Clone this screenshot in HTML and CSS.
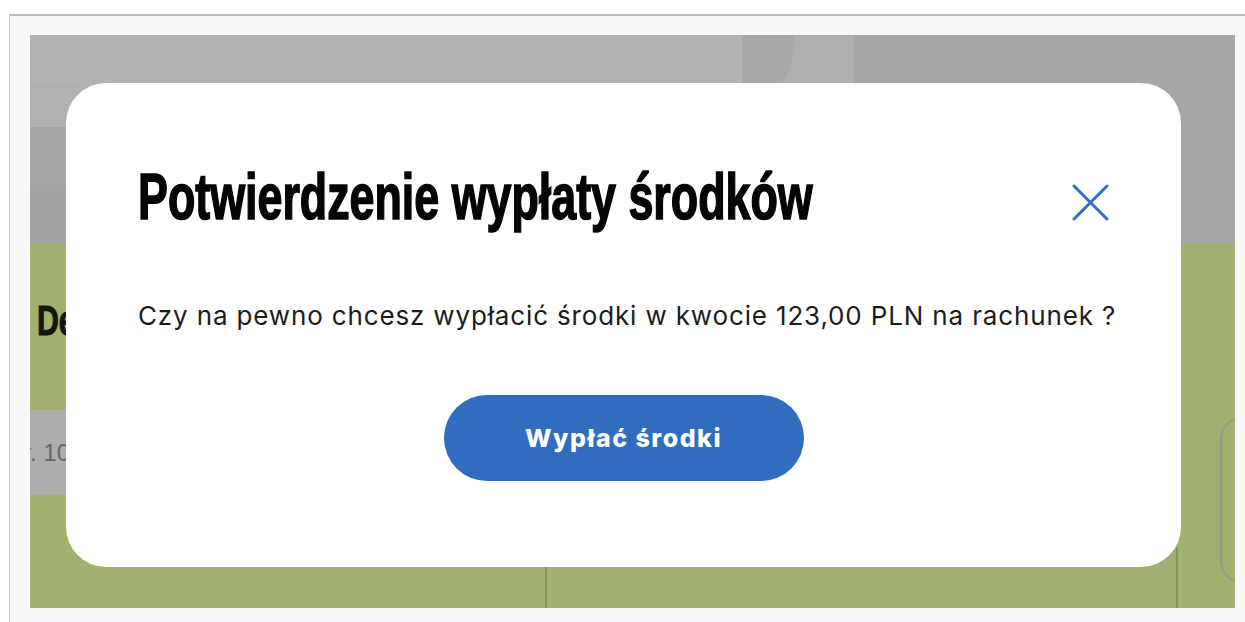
FILE: index.html
```html
<!DOCTYPE html>
<html lang="pl">
<head>
<meta charset="utf-8">
<title>Potwierdzenie wypłaty środków</title>
<link rel="stylesheet" href="styles.css">
</head>
<body>
<div class="window">
  <div class="stage">
    <div class="page">
      <div class="page-header">
        <div class="header-fill"></div>
        <div class="header-mark"><span class="header-mark-cut"></span></div>
        <div class="header-right"></div>
      </div>
      <div class="bands">
        <div class="bands-left">
          <div class="band band-a"></div>
          <div class="band band-b"></div>
          <div class="band band-c"></div>
        </div>
        <div class="bands-right"></div>
      </div>
      <div class="content">
        <div class="main">
          <div class="section-head"><h2 class="section-title">Depozyt</h2></div>
          <div class="field"><span class="field-text">Nr. 1000 2000 3000</span></div>
          <div class="table-row">
            <div class="cell cell-first"></div>
            <div class="cell cell-second"></div>
          </div>
        </div>
        <div class="aside">
          <div class="aside-rule"></div>
          <div class="aside-card"></div>
        </div>
      </div>
    </div>

    <div class="dialog" role="dialog" aria-labelledby="dialog-title">
      <div class="dialog-head">
        <h1 class="dialog-title" id="dialog-title">Potwierdzenie wypłaty środków</h1>
        <button class="dialog-close" type="button" aria-label="Zamknij">
          <svg width="37" height="37" viewBox="0 0 37 37" aria-hidden="true">
            <path d="M2 2 L35 35 M35 2 L2 35" stroke="currentColor" stroke-width="3" stroke-linecap="round" fill="none"/>
          </svg>
        </button>
      </div>
      <p class="dialog-text">Czy na pewno chcesz wypłacić środki w kwocie 123,00 PLN na rachunek ?</p>
      <div class="dialog-actions">
        <button class="btn-primary" type="button">Wypłać środki</button>
      </div>
    </div>
  </div>
</div>
</body>
</html>
```

FILE: styles.css
```css
* {
  box-sizing: border-box;
}

html, body {
  margin: 0;
  padding: 0;
  background: #ffffff;
  height: 100%;
  overflow: hidden;
}

/* browser-like frame around the page */
.window {
  margin: 14px 0 0 9px;
  height: 608px;
  background: #f8f8f8;
  border-top: 2px solid #b9b9b9;
  border-left: 1px solid #c9c9c9;
  padding: 19px 10px 0 20px;
}

.stage {
  position: relative;
  width: 1205px;
  height: 573px;
  overflow: hidden;
}

.page {
  display: flex;
  flex-direction: column;
  height: 100%;
}

/* dimmed header */
.page-header {
  display: flex;
  height: 48px;
  flex: none;
}

.header-fill {
  width: 712px;
  background: #b3b3b3;
}

.header-mark {
  width: 112px;
  background: #afafaf;
}

.header-mark-cut {
  display: block;
  width: 52px;
  height: 100%;
  background: #a8a8a8;
  border-bottom-right-radius: 16px 44px;
}

.header-right {
  flex: 1;
  background: #a6a6a6;
}

.bands {
  display: flex;
  height: 160px;
  flex: none;
}

.bands-left {
  width: 824px;
  display: flex;
  flex-direction: column;
}

.band-a { height: 44px; background: #b1b1b1; }
.band-b { height: 58px; background: #a7a7a7; }
.band-c { height: 58px; background: #a3a3a3; }

.bands-right {
  flex: 1;
  background: #a6a6a6;
}

/* dimmed green content */
.content {
  flex: 1;
  display: flex;
  background: #a0b06f;
}

.main {
  flex: none;
  width: 1146px;
  display: flex;
  flex-direction: column;
}

.section-head {
  width: 36px;
  overflow: hidden;
  margin-top: 56px;
  padding-left: 7px;
}

.section-title {
  margin: 0;
  display: inline-block;
  font-family: "Liberation Sans", Arial, sans-serif;
  font-weight: 700;
  font-size: 42px;
  line-height: 44px;
  color: #151515;
  white-space: nowrap;
  -webkit-text-stroke: 1px #151515;
  transform: scaleX(0.72);
  transform-origin: left center;
}

.field {
  margin-top: 67px;
  height: 85px;
  width: 600px;
  background: #adadad;
  display: flex;
  align-items: center;
}

.field-text {
  margin-left: -24px;
  font-family: "Liberation Sans", Arial, sans-serif;
  font-size: 24px;
  color: #676767;
  white-space: nowrap;
}

.table-row {
  margin-top: auto;
  height: 61px;
  display: flex;
}

.cell-first {
  width: 515px;
}

.cell-second {
  flex: 1;
  border-left: 2px solid #84925e;
}

.aside {
  flex: 1;
  min-width: 0;
  display: flex;
}

.aside-rule {
  flex: none;
  width: 2px;
  height: 61px;
  align-self: flex-end;
  background: #84925e;
}

.aside-card {
  flex: none;
  width: 80px;
  height: 166px;
  margin: 174px 0 0 42px;
  border: 2px solid #939c87;
  border-radius: 22px;
}

/* confirmation dialog */
.dialog {
  position: absolute;
  left: 36px;
  top: 48px;
  width: 1115px;
  height: 484px;
  background: #ffffff;
  border-radius: 40px;
  padding: 82px 72px 0 72px;
  display: flex;
  flex-direction: column;
}

.dialog-head {
  display: flex;
  align-items: center;
  height: 64px;
}

.dialog-title {
  flex: 1;
  min-width: 0;
  margin: 0;
  font-family: "Liberation Sans", Arial, sans-serif;
  font-weight: 700;
  font-size: 64px;
  line-height: 64px;
  color: #050505;
  white-space: nowrap;
  -webkit-text-stroke: 1.6px #050505;
  transform: scaleX(0.70);
  transform-origin: left center;
}

.dialog-close {
  flex: none;
  margin: 10px 0 0 0;
  padding: 0;
  border: 0;
  background: none;
  width: 37px;
  height: 37px;
  color: #2f6ec2;
  display: flex;
}

.dialog-text {
  margin: 72px 0 0 0;
  font-family: Inter, "Liberation Sans", sans-serif;
  font-size: 26px;
  line-height: 29px;
  letter-spacing: 0.85px;
  color: #1c1c1c;
  white-space: nowrap;
}

.dialog-actions {
  display: flex;
  justify-content: center;
  margin-top: 65px;
}

.btn-primary {
  width: 360px;
  height: 86px;
  border: 0;
  border-radius: 43px;
  background: #306dbf;
  color: #ffffff;
  font-family: Inter, "Liberation Sans", sans-serif;
  font-weight: 800;
  font-size: 25px;
  letter-spacing: 1.5px;
}
```
